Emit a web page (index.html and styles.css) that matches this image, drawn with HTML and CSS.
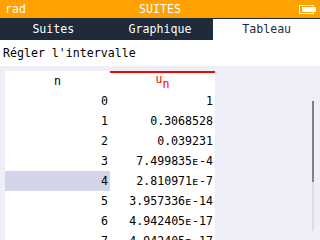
FILE: index.html
```html
<!DOCTYPE html>
<html lang="fr">
<head>
<meta charset="utf-8">
<link rel="stylesheet" href="styles.css">
</head>
<body>
<div class="screen">
  <header class="titlebar">
    <span class="angle">rad</span>
    <span class="title">SUITES</span>
    <svg class="battery" width="17" height="9" viewBox="0 0 17 9">
      <rect x="0.5" y="0.5" width="14" height="8" fill="none" stroke="#fff"/>
      <rect x="3" y="2" width="11" height="5" fill="#fff"/>
      <rect x="15" y="2" width="2" height="5" fill="#fff"/>
    </svg>
  </header>
  <nav class="tabs">
    <div class="tab">Suites</div>
    <div class="tab">Graphique</div>
    <div class="tab active">Tableau</div>
  </nav>
  <div class="setting">Régler l'intervalle</div>
  <main class="content">
    <div class="table">
      <div class="cell head">n</div>
      <div class="cell head seq">u<sub>n</sub></div>
      <div class="cell num">0</div><div class="cell num">1</div>
      <div class="cell num">1</div><div class="cell num">0.3068528</div>
      <div class="cell num">2</div><div class="cell num">0.039231</div>
      <div class="cell num">3</div><div class="cell num">7.499835ᴇ-4</div>
      <div class="cell num sel">4</div><div class="cell num">2.810971ᴇ-7</div>
      <div class="cell num">5</div><div class="cell num">3.957336ᴇ-14</div>
      <div class="cell num">6</div><div class="cell num">4.942405ᴇ-17</div>
      <div class="cell num">7</div><div class="cell num">4.942405ᴇ-17</div>
    </div>
    <div class="scrollbar"><div class="thumb"></div></div>
  </main>
</div>
</body>
</html>
```
FILE: styles.css
```css
* { box-sizing: border-box; }
html, body { margin: 0; padding: 0; }
body {
  width: 320px;
  height: 240px;
  overflow: hidden;
  font-family: "DejaVu Sans Mono", "Liberation Mono", monospace;
  font-size: 11.6px;
  color: #000;
}
.screen {
  width: 320px;
  height: 240px;
  display: flex;
  flex-direction: column;
  background: #eeeef8;
}
.titlebar {
  height: 18px;
  background: #ffa100;
  color: #fff;
  display: flex;
  align-items: center;
  padding: 0 4px 0 5px;
  position: relative;
}
.angle { flex: 1; line-height: 18px; }
.title {
  position: absolute;
  left: 0;
  right: 0;
  text-align: center;
  line-height: 18px;
}
.battery { display: block; margin-top: 1px; }
.tabs {
  height: 22px;
  background: #1f2b3a;
  display: flex;
  padding-top: 1px;
}
.tab {
  flex: 1;
  color: #fff;
  text-align: center;
  line-height: 21px;
}
.tab.active {
  background: #fff;
  color: #1f2b3a;
}
.setting {
  height: 26px;
  background: #fff;
  line-height: 26px;
  padding-left: 3px;
}
.content {
  flex: 1;
  display: flex;
  padding: 5px 0 0 5px;
  overflow: hidden;
}
.table {
  display: grid;
  grid-template-columns: 105px 105px;
  grid-auto-rows: 20px;
  background: #fff;
  align-self: flex-start;
}
.cell {
  line-height: 20px;
  padding-right: 2px;
  white-space: nowrap;
}
.head { text-align: center; padding-right: 0; }
.seq {
  color: #ff0000;
  border-top: 2px solid #ff0000;
  line-height: 12px;
}
.seq sub {
  font-size: 1em;
  vertical-align: -5px;
  line-height: 0;
}
.num { text-align: right; }
.sel { background: #d2d5ea; }
.scrollbar {
  margin: 30px 0 0 97px;
  width: 2px;
  height: 130px;
  background: #dcdce6;
}
.thumb {
  height: 81px;
  background: #808080;
}
```
